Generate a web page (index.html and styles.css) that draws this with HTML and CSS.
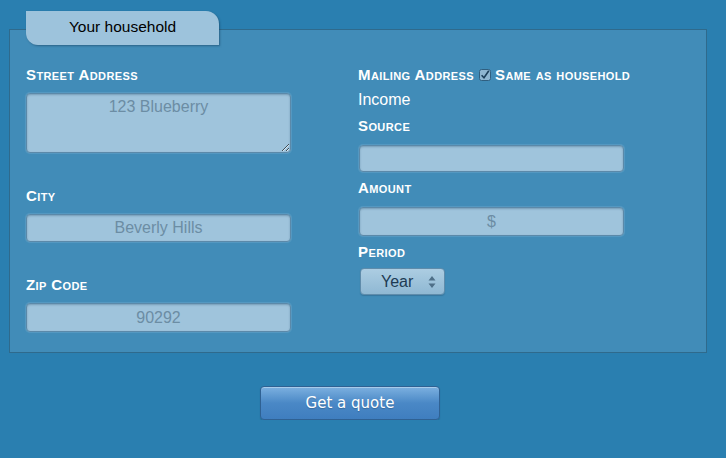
FILE: index.html
```html
<!DOCTYPE html>
<html>
<head>
<meta charset="utf-8">
<link rel="stylesheet" href="styles.css">
</head>
<body>
<div class="wrap">
  <div class="tab">Your household</div>
  <div class="panel">
    <div class="col col-left">
      <div class="label">Street Address</div>
      <textarea class="field area">123 Blueberry</textarea>
      <div class="label gap-big">City</div>
      <input class="field" type="text" value="Beverly Hills">
      <div class="label gap-big">Zip Code</div>
      <input class="field zip" type="text" value="90292">
    </div>
    <div class="col col-right">
      <div class="label mail">Mailing Address
        <span class="check"><svg width="12" height="12" viewBox="0 0 12 12"><rect x="0.5" y="0.5" width="11" height="11" rx="2" fill="#8fb6d1" stroke="#2f5f80"/><path d="M2.6 6.2 L5 8.8 L9.8 1.8" fill="none" stroke="#1d3f5a" stroke-width="1.6"/></svg></span>
        Same as household</div>
      <div class="income">Income</div>
      <div class="label after-11">Source</div>
      <input class="field r1" type="text" value="">
      <div class="label before-8 after-11">Amount</div>
      <input class="field r2" type="text" value="$">
      <div class="label before-8 after-8">Period</div>
      <div class="select"><span>Year</span><svg class="arrows" width="8" height="14" viewBox="0 0 8 14"><path d="M4 1 L7.5 5.5 L0.5 5.5 Z M4 13 L7.5 8.5 L0.5 8.5 Z" fill="#4e6f88"/></svg></div>
    </div>
  </div>
  <div class="actions">
    <button class="btn">Get a quote</button>
  </div>
</div>
</body>
</html>
```
FILE: styles.css
```css
html, body {
  margin: 0;
  padding: 0;
  background: #2a7fb0;
  font-family: "Liberation Sans", Arial, sans-serif;
}
.wrap {
  padding: 11px 19px 0 9px;
}
.tab {
  position: relative;
  z-index: 1;
  margin-left: 17px;
  width: 193px;
  height: 34px;
  box-sizing: border-box;
  background: #9dc3dc;
  border-radius: 0 13px 0 12px;
  box-shadow: 1px 1px 2px rgba(20, 60, 90, 0.5);
  color: #000;
  font-size: 15.5px;
  line-height: 32px;
  text-align: center;
  margin-bottom: -16px;
}
.panel {
  display: flex;
  background: #418cb8;
  border: 1px solid #2f6a8c;
  padding: 37px 0 19px 16px;
  height: 324px;
  box-sizing: border-box;
}
.col {
  display: flex;
  flex-direction: column;
  align-items: flex-start;
}
.col-left {
  width: 265px;
}
.col-right {
  margin-left: 67px;
}
.label {
  color: #fff;
  font-weight: bold;
  font-size: 15px;
  letter-spacing: 0.4px;
  font-variant: small-caps;
  line-height: 16px;
  height: 16px;
  margin-bottom: 10px;
  white-space: nowrap;
}
.gap-big { margin-top: 35px; }
.before-8 { margin-top: 8px; }
.after-11 { margin-bottom: 11px; }
.after-8 { margin-bottom: 8px; }
.field {
  display: block;
  box-sizing: border-box;
  width: 265px;
  height: 28px;
  margin: 0;
  padding: 0 6px;
  background: #9fc4dc;
  border: 1px solid #5b89a9;
  border-radius: 4px;
  box-shadow: inset 0 1px 2px rgba(40, 80, 110, 0.35), 0 0 1px 1px rgba(150, 195, 225, 0.25);
  color: #6c8da4;
  font-family: "Liberation Sans", Arial, sans-serif;
  font-size: 16px;
  text-align: center;
  outline: none;
}
.area {
  height: 60px;
  padding: 4px 6px;
  resize: both;
  line-height: 18px;
  overflow: hidden;
}
.zip { height: 29px; }
.mail {
  display: flex;
  align-items: center;
  margin-bottom: 9px;
}
.check {
  display: inline-flex;
  margin: 0 4px 0 5px;
}
.income {
  color: #fff;
  font-size: 16px;
  line-height: 16px;
  height: 16px;
  margin-bottom: 10px;
}
.r1 { height: 27px; margin-left: 1px; }
.r2 { height: 29px; margin-left: 1px; }
.select {
  position: relative;
  box-sizing: border-box;
  width: 85px;
  height: 27px;
  margin-left: 2px;
  border: 1px solid #5f8cab;
  border-radius: 4px;
  background: linear-gradient(#accde2, #8fb8d3);
  box-shadow: 0 1px 1px rgba(30, 70, 100, 0.3);
  color: #1d3b54;
  font-size: 16px;
  line-height: 25px;
  padding-left: 20px;
}
.arrows {
  position: absolute;
  right: 8px;
  top: 6px;
}
.actions {
  padding: 33px 0 0 251px;
}
.btn {
  width: 180px;
  height: 34px;
  border: 1px solid #2f6193;
  border-radius: 4px;
  background: linear-gradient(#7cb0e0, #4a88c6 50%, #3f7ebf);
  box-shadow: inset 0 1px 0 rgba(255,255,255,0.35), 0 1px 1px rgba(20,50,80,0.3);
  color: #fff;
  font-family: "DejaVu Sans", sans-serif;
  font-size: 15px;
  padding: 0;
  text-shadow: 0 1px 1px rgba(0,0,0,0.2);
}
```
